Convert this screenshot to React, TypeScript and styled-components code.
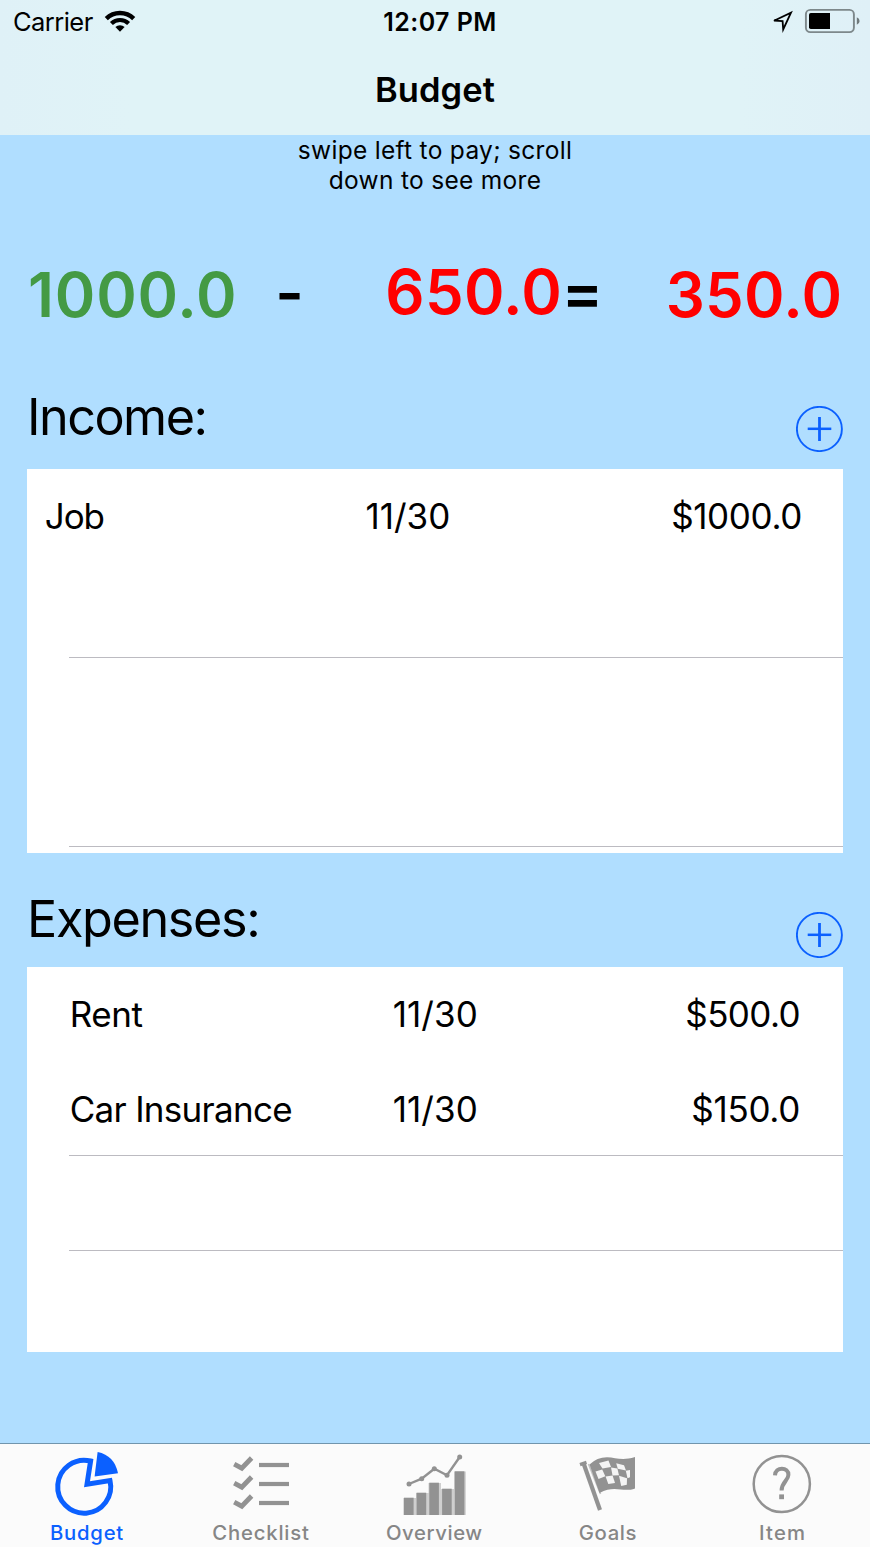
import React from "react";
import styled, { createGlobalStyle } from "styled-components";

const BLUE = "#0b60ff";
const GREY = "#929292";

const GlobalStyle = createGlobalStyle`
  * { box-sizing: border-box; }
  body { margin: 0; font-family: Inter, "Liberation Sans", sans-serif; color: #000; }
`;

const Screen = styled.div`
  display: flex;
  flex-direction: column;
  width: 870px;
  height: 1547px;
  overflow: hidden;
  background: #b0deff;
`;

const Header = styled.header`
  height: 135px;
  background: linear-gradient(90deg, #dff1f7, #e0f3f7 15%, #e0f3f7 85%, #dff0f7);
`;

const StatusBar = styled.div`
  display: grid;
  grid-template-columns: 1fr auto 1fr;
  align-items: center;
  height: 44px;
  padding: 0 9px 0 13px;
`;

const StatusSide = styled.div<{ $end?: boolean }>`
  display: flex;
  align-items: center;
  justify-content: ${(p) => (p.$end ? "flex-end" : "flex-start")};
  gap: ${(p) => (p.$end ? "12px" : "11px")};
`;

const Carrier = styled.span`
  font-size: 25.5px;
  letter-spacing: -0.55px;
  line-height: 44px;
`;

const Clock = styled.span`
  font-size: 25px;
  font-weight: 600;
  letter-spacing: 0.45px;
  line-height: 44px;
  margin-left: 6px;
`;

const Title = styled.h1`
  margin: 21px 0 0;
  font-size: 34.5px;
  font-weight: 600;
  letter-spacing: 0.1px;
  line-height: 50px;
  text-align: center;
`;

const Main = styled.main`
  flex: 1;
  padding: 1px 27px 0;
`;

const Hint = styled.p`
  width: 290px;
  height: 119px;
  margin: 0 auto;
  font-size: 24.5px;
  letter-spacing: 0.3px;
  line-height: 29.6px;
  text-align: center;
`;

const Equation = styled.div`
  display: grid;
  grid-template-columns: 247.2px 110.1px 176.4px 104px auto;
  align-items: start;
  height: 80px;
  padding-left: 1px;
`;

const Figure = styled.span<{ $color: string; $line?: number; $spacing?: number }>`
  color: ${(p) => p.$color};
  font-size: 61.5px;
  font-weight: 600;
  letter-spacing: ${(p) => p.$spacing ?? 0.3}px;
  line-height: ${(p) => p.$line ?? 79.5}px;
  white-space: nowrap;
`;

const SectionHead = styled.div<{ $height: number; $inset: number }>`
  display: flex;
  align-items: flex-end;
  justify-content: space-between;
  height: ${(p) => p.$height}px;
  padding-bottom: ${(p) => p.$inset}px;
`;

const SectionTitle = styled.h2<{ $lift: number; $spacing: number }>`
  margin: 0 0 ${(p) => p.$lift}px;
  font-size: 50.3px;
  font-weight: 400;
  letter-spacing: ${(p) => p.$spacing}px;
  line-height: 62px;
`;

const AddButton = styled.button`
  display: block;
  width: 47px;
  height: 46px;
  padding: 0;
  border: 0;
  background: none;
`;

const List = styled.div<{ $height: number }>`
  height: ${(p) => p.$height}px;
  background: #fff;
`;

const Row = styled.div<{ $height: number; $left: number; $right: number; $dateAt?: number }>`
  display: grid;
  grid-template-columns: ${(p) => p.$dateAt ?? 323}px 1fr auto;
  height: ${(p) => p.$height}px;
  padding: 0 ${(p) => p.$right}px 0 ${(p) => p.$left}px;
`;

const Cell = styled.span<{ $spacing: number }>`
  font-size: 35px;
  letter-spacing: ${(p) => p.$spacing}px;
  line-height: 95px;
  white-space: nowrap;
`;

const Divider = styled.div`
  height: 1px;
  margin-left: 42px;
  background: #bcbbc1;
`;

const TabBar = styled.nav`
  display: grid;
  grid-template-columns: repeat(5, 1fr);
  height: 104px;
  border-top: 1px solid #7195ad;
  background: #fbfbfb;
`;

const Tab = styled.a<{ $active?: boolean }>`
  display: flex;
  flex-direction: column;
  align-items: center;
  padding-top: 3px;
  color: ${(p) => (p.$active ? BLUE : GREY)};
`;

const TabLabel = styled.span<{ $active?: boolean; $spacing: number; $trail: number }>`
  padding-right: ${(p) => p.$trail}px;
  color: ${(p) => (p.$active ? BLUE : "#868686")};
  font-size: 20.3px;
  font-weight: 450;
  letter-spacing: ${(p) => p.$spacing}px;
  line-height: 30px;
`;

const Glyph = styled.svg`
  display: block;
  width: 72px;
  height: 71px;
`;

const Icon = styled.svg`
  display: block;
`;

const WifiIcon = () => (
  <Icon width="32" height="24" viewBox="104 10 32 24" fill="none" stroke="#000">
    <path d="M106.3 18.6A19.4 19.4 0 0 1 133.7 18.6" strokeWidth="4.4" />
    <path d="M111.4 23.5A12.3 12.3 0 0 1 128.6 23.5" strokeWidth="4.2" />
    <path d="M120 31.8L115.4 27.1A6.6 6.6 0 0 1 124.6 27.1Z" fill="#000" stroke="none" />
  </Icon>
);

const LocationIcon = () => (
  <Icon width="22" height="24" viewBox="771 10 22 24" fill="none">
    <path d="M774 20.7L791 12.6L783.2 29.4L782.6 21.2Z" stroke="#000" strokeWidth="1.8" />
  </Icon>
);

const BatteryIcon = () => (
  <Icon width="56" height="24" viewBox="805 10 56 24" fill="none" overflow="visible">
    <rect x="805.9" y="9.9" width="48" height="22.2" rx="4.4" stroke="#7d888b" strokeWidth="1.9" />
    <rect x="809" y="13" width="21" height="16" rx="1.8" fill="#000" />
    <path d="M828 13h2v16h-2z" fill="#000" />
    <path d="M856.8 17.2Q859.6 18.2 859.6 21T856.8 24.8Z" fill="#6f797c" />
  </Icon>
);

const PlusIcon = () => (
  <Icon width="47" height="46" viewBox="0 0 47 46" fill="none" stroke={BLUE}>
    <ellipse cx="23.4" cy="23" rx="22.5" ry="22.1" strokeWidth="1.9" />
    <path d="M11.7 22.8H35.3" strokeWidth="2.5" />
    <path d="M23.5 11V35" strokeWidth="2.8" />
  </Icon>
);

const PieGlyph = () => (
  <Glyph viewBox="0 0 72 71" fill="none">
    <path
      d="M39.6 14L36 37.2L59 33.6A26.5 26.5 0 1 1 39.6 14Z"
      stroke="currentColor"
      strokeWidth="5"
    />
    <path d="M46.6 5Q63.5 8.5 67 26.3L43.6 29.6Z" fill="currentColor" />
  </Glyph>
);

const ChecklistGlyph = () => (
  <Glyph viewBox="0 0 72 71" fill="none" stroke="currentColor">
    {[0, 19, 38].map((dy) => (
      <g key={dy}>
        <path d={`M9.2 ${17.2 + dy}L16.8 ${21.2 + dy}L26.6 ${11 + dy}`} strokeWidth="4.8" />
        <path d={`M34 ${18 + dy}H64`} strokeWidth="4.2" />
      </g>
    ))}
  </Glyph>
);

const ChartGlyph = () => (
  <Glyph viewBox="0 0 72 71" fill="none">
    <path
      d="M4.3 51H17V46H29.5V36H42V42H55V24.5H66.8V68H4.3Z"
      fill="#cfcfcf"
    />
    {[
      [5, 50.7],
      [17.6, 45.7],
      [30.3, 35.7],
      [43.1, 41.7],
      [55.8, 24.3],
    ].map(([x, y]) => (
      <rect key={x} x={x} y={y} width="9.6" height={68 - y} fill="currentColor" />
    ))}
    <path d="M10 37L22.7 31.7L35.3 21.7L48 28.3L60.7 10" stroke="currentColor" strokeWidth="2.4" />
    {[
      [10, 37],
      [22.7, 31.7],
      [35.3, 21.7],
      [48, 28.3],
      [60.7, 10],
    ].map(([x, y]) => (
      <circle key={x} cx={x} cy={y} r="2.5" fill="currentColor" />
    ))}
  </Glyph>
);

const FlagGlyph = () => (
  <Glyph viewBox="0 0 72 71" fill="none">
    <path d="M10.6 16.5L27 63" stroke="currentColor" strokeWidth="4.2" />
    <path d="M7 17.6L13.5 15.4" stroke="currentColor" strokeWidth="3.4" />
    <path d="M15.5 17L27.5 47" stroke="#c4c4c4" strokeWidth="1.6" />
    <path
      d="M16.5 17.5Q24 10.2 34 10.2C43 10.5 49 14 62 10V41.4C50 46 42 37.5 26.5 46Z"
      fill="currentColor"
    />
    <g fill="#f4f4f4">
      <path d="M26 16L35.5 13.5L38 20L29.5 21.5L27.5 18.5Z" />
      <path d="M22.5 24.5L29.2 22.5L32.3 29.3L25.5 32Z" />
      <path d="M38 20.4L44.4 21.6L46 28.2L39.5 28.5Z" />
      <path d="M32.6 29.6L39.6 28.4L42 36L35.3 37Z" />
      <path d="M43.2 16.2L51 18.2L53 23.4L44.8 21.7Z" />
      <path d="M52.8 23.8L57 23V30.3L54.5 31.3Z" />
      <path d="M46 28.8L54 31.3L53.8 37.8L48.2 39Z" />
    </g>
  </Glyph>
);

const HelpGlyph = () => (
  <Glyph viewBox="0 0 72 71" fill="none" stroke="currentColor">
    <circle cx="34.8" cy="37" r="28.1" strokeWidth="2.5" />
    <path d="M28 28.4C28.2 19.4 41.8 19.8 41.4 28C41.2 33.8 34.7 35 34.6 43.4" strokeWidth="4" />
    <path d="M34.6 47.4V52.2" strokeWidth="4.8" />
  </Glyph>
);

interface Entry {
  name: string;
  date: string;
  amount: string;
  spacing: [number, number, number];
}

const income: Entry[] = [
  { name: "Job", date: "11/30", amount: "$1000.0", spacing: [-1.1, 0, -0.35] },
];

const expenses: Entry[] = [
  { name: "Rent", date: "11/30", amount: "$500.0", spacing: [-0.4, 0.1, -0.6] },
  { name: "Car Insurance", date: "11/30", amount: "$150.0", spacing: [-0.7, 0.1, -0.3] },
];

const tabs = [
  { label: "Budget", glyph: <PieGlyph />, spacing: 0.75, trail: 0, active: true },
  { label: "Checklist", glyph: <ChecklistGlyph />, spacing: 0.8, trail: 0 },
  { label: "Overview", glyph: <ChartGlyph />, spacing: 0.6, trail: 1.4 },
  { label: "Goals", glyph: <FlagGlyph />, spacing: 0.65, trail: 2 },
  { label: "Item", glyph: <HelpGlyph />, spacing: 1.2, trail: 0.6 },
];

const EntryCells = ({ entry }: { entry: Entry }) => (
  <>
    <Cell $spacing={entry.spacing[0]}>{entry.name}</Cell>
    <Cell $spacing={entry.spacing[1]}>{entry.date}</Cell>
    <Cell $spacing={entry.spacing[2]}>{entry.amount}</Cell>
  </>
);

export default function App() {
  return (
    <Screen>
      <GlobalStyle />
      <Header>
        <StatusBar>
          <StatusSide>
            <Carrier>Carrier</Carrier>
            <WifiIcon />
          </StatusSide>
          <Clock>12:07 PM</Clock>
          <StatusSide $end>
            <LocationIcon />
            <BatteryIcon />
          </StatusSide>
        </StatusBar>
        <Title>Budget</Title>
      </Header>
      <Main>
        <Hint>
          swipe left to pay; scroll
          <br />
          down to see more
        </Hint>
        <Equation>
          <Figure $color="#449a44" $spacing={0.8}>1000.0</Figure>
          <Figure $color="#000" $line={75.5}>-</Figure>
          <Figure $color="#ff0000" $line={74}>650.0</Figure>
          <Figure $color="#000" $line={74.5}>=</Figure>
          <Figure $color="#ff0000">350.0</Figure>
        </Equation>
        <SectionHead $height={134} $inset={17}>
          <SectionTitle $lift={4} $spacing={-1.5}>Income:</SectionTitle>
          <AddButton aria-label="Add income"><PlusIcon /></AddButton>
        </SectionHead>
        <List $height={384}>
          {income.map((entry) => (
            <Row key={entry.name} $height={188} $left={17.8} $right={41} $dateAt={320.7}>
              <EntryCells entry={entry} />
            </Row>
          ))}
          <Divider />
          <Row $height={188} $left={17.8} $right={41} />
          <Divider />
        </List>
        <SectionHead $height={114} $inset={9}>
          <SectionTitle $lift={8.5} $spacing={-1.35}>Expenses:</SectionTitle>
          <AddButton aria-label="Add expense"><PlusIcon /></AddButton>
        </SectionHead>
        <List $height={385}>
          {expenses.map((entry, i) => (
            <Row key={entry.name} $height={i === 0 ? 95 : 93} $left={42.7} $right={43}>
              <EntryCells entry={entry} />
            </Row>
          ))}
          <Divider />
          <Row $height={94} $left={42.7} $right={43} />
          <Divider />
        </List>
      </Main>
      <TabBar>
        {tabs.map((tab) => (
          <Tab key={tab.label} $active={tab.active}>
            {tab.glyph}
            <TabLabel $active={tab.active} $spacing={tab.spacing} $trail={tab.trail}>
              {tab.label}
            </TabLabel>
          </Tab>
        ))}
      </TabBar>
    </Screen>
  );
}
